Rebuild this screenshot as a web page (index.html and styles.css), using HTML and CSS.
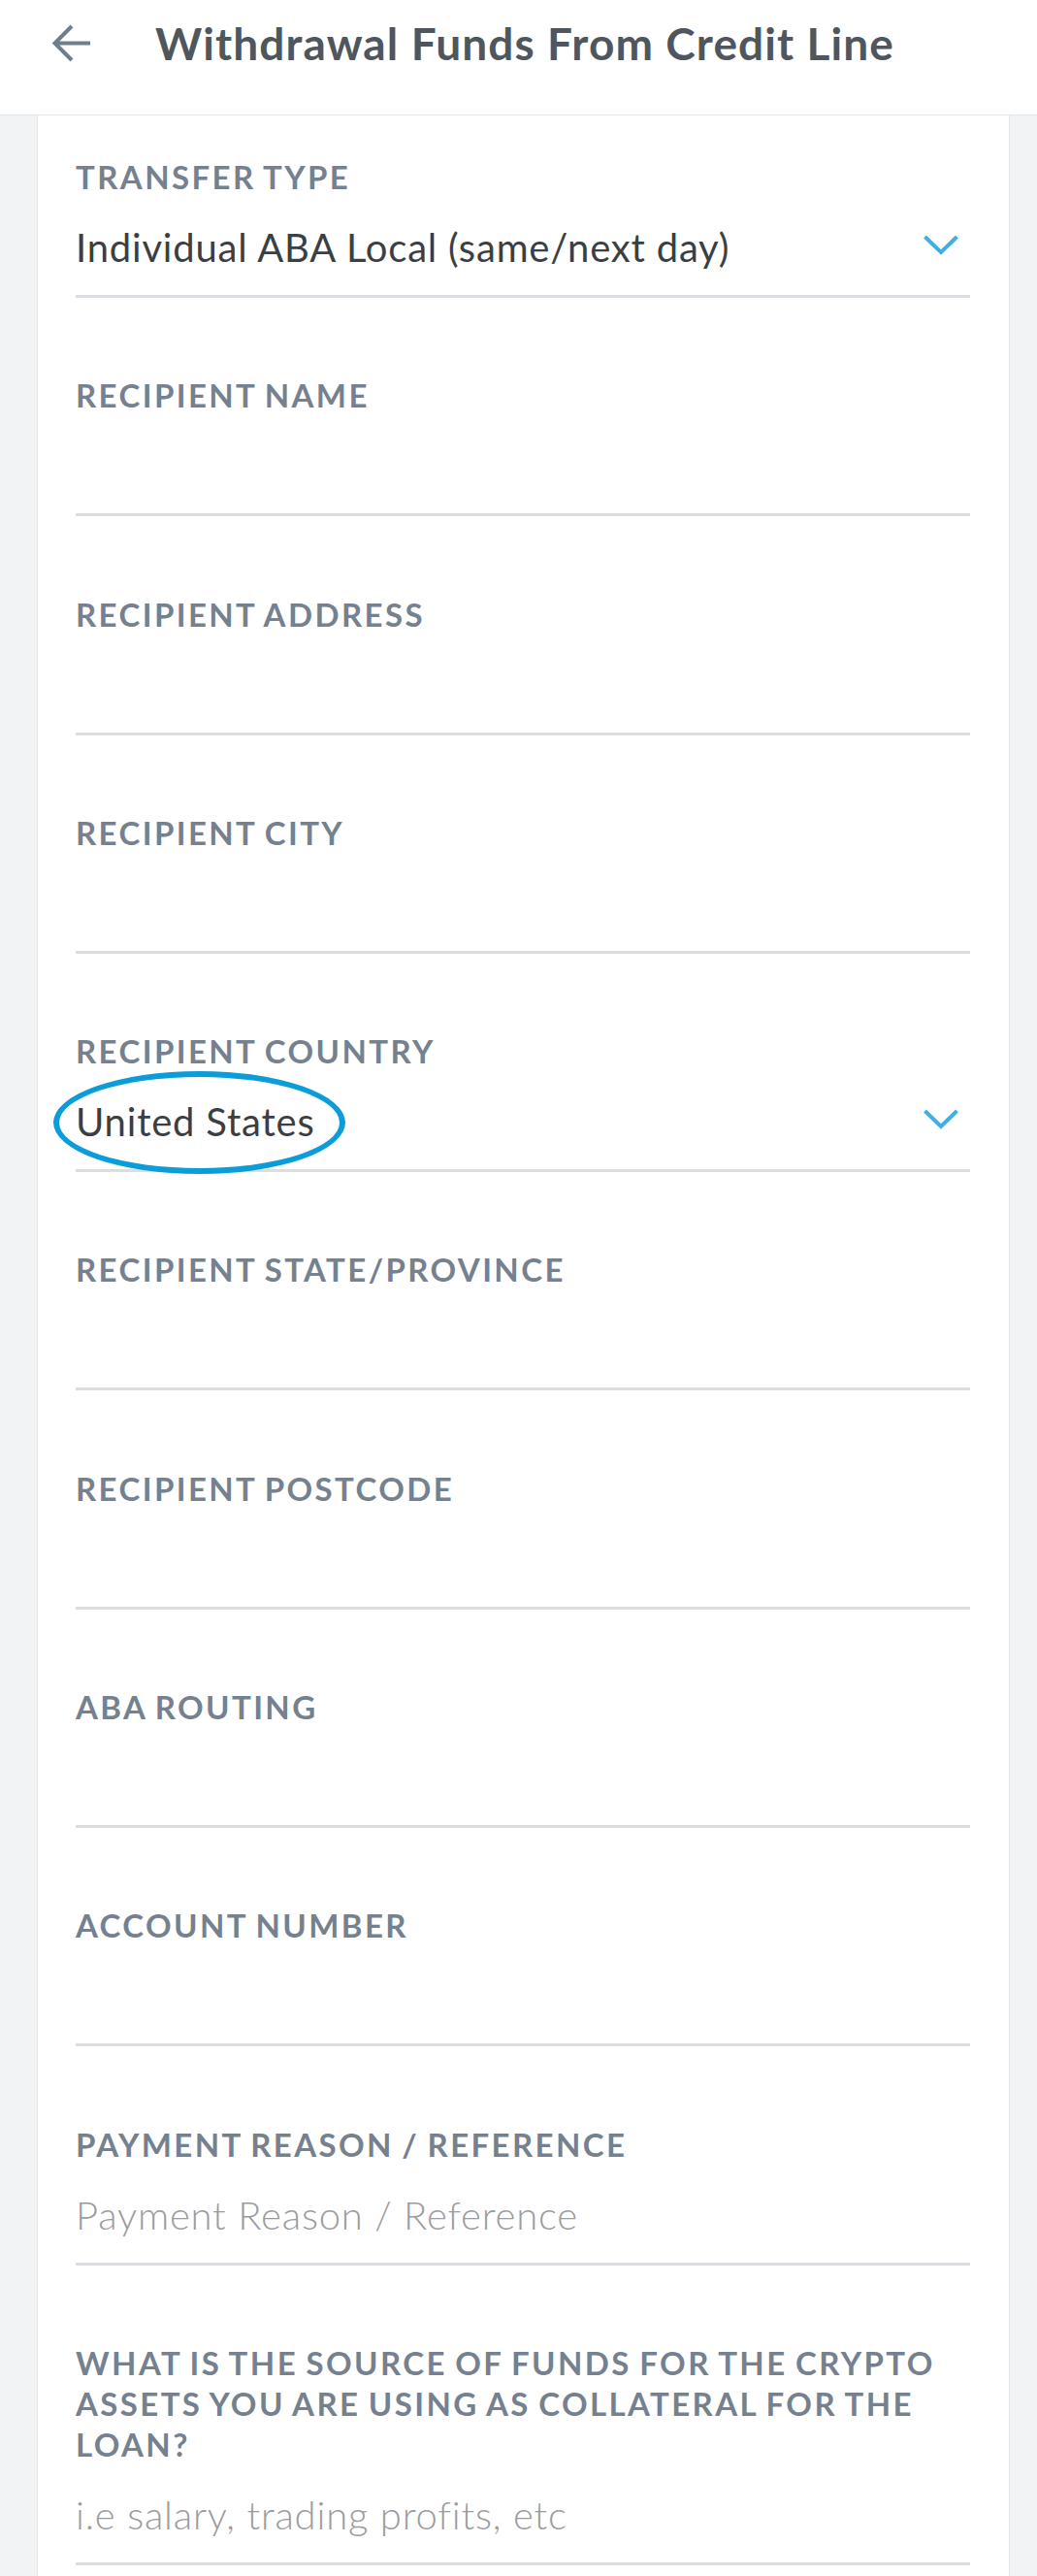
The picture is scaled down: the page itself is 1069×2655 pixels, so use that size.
FILE: index.html
```html
<!DOCTYPE html>
<html lang="en">
<head>
<meta charset="utf-8">
<title>Withdrawal Funds From Credit Line</title>
<link rel="stylesheet" href="styles.css">
</head>
<body>
<div class="app">
  <header class="topbar">
    <div class="topbar-row">
      <svg class="back" viewBox="0 0 42 42" width="42" height="42" aria-hidden="true">
        <path d="M40 20.5H4 M21 3 L3.5 20.5 L21 38" fill="none" stroke="#6f7e8d" stroke-width="4" stroke-linecap="butt" stroke-linejoin="miter"/>
      </svg>
      <h1 class="title">Withdrawal Funds From Credit Line</h1>
    </div>
  </header>
  <main class="card">
    <div class="field">
      <div class="label">TRANSFER TYPE</div>
      <div class="value-row">
        <span class="value">Individual ABA Local (same/next day)</span>
        <svg class="chev" viewBox="0 0 36 22" width="36" height="22" aria-hidden="true"><path d="M1.5 2 L18 18 L34.5 2" fill="none" stroke="#3eb0e2" stroke-width="4"/></svg>
      </div>
    </div>
    <div class="field">
      <div class="label">RECIPIENT NAME</div>
      <div class="value-row"></div>
    </div>
    <div class="field">
      <div class="label">RECIPIENT ADDRESS</div>
      <div class="value-row"></div>
    </div>
    <div class="field">
      <div class="label">RECIPIENT CITY</div>
      <div class="value-row"></div>
    </div>
    <div class="field">
      <div class="label">RECIPIENT COUNTRY</div>
      <div class="value-row">
        <span class="value circled">United States<span class="ring" aria-hidden="true"></span></span>
        <svg class="chev" viewBox="0 0 36 22" width="36" height="22" aria-hidden="true"><path d="M1.5 2 L18 18 L34.5 2" fill="none" stroke="#3eb0e2" stroke-width="4"/></svg>
      </div>
    </div>
    <div class="field">
      <div class="label">RECIPIENT STATE/PROVINCE</div>
      <div class="value-row"></div>
    </div>
    <div class="field">
      <div class="label">RECIPIENT POSTCODE</div>
      <div class="value-row"></div>
    </div>
    <div class="field">
      <div class="label">ABA ROUTING</div>
      <div class="value-row"></div>
    </div>
    <div class="field">
      <div class="label">ACCOUNT NUMBER</div>
      <div class="value-row"></div>
    </div>
    <div class="field">
      <div class="label">PAYMENT REASON / REFERENCE</div>
      <div class="value-row"><span class="placeholder">Payment Reason / Reference</span></div>
    </div>
    <div class="field">
      <div class="label">WHAT IS THE SOURCE OF FUNDS FOR THE CRYPTO ASSETS YOU ARE USING AS COLLATERAL FOR THE LOAN?</div>
      <div class="value-row"><span class="placeholder">i.e salary, trading profits, etc</span></div>
    </div>
  </main>
</div>
</body>
</html>
```
FILE: styles.css
```css
* { box-sizing: border-box; }
html, body { margin: 0; padding: 0; }
body {
  background: #f2f3f5;
  font-family: Lato, "Open Sans", "Liberation Sans", sans-serif;
}
.app {
  height: 2655px;
  overflow: hidden;
  display: flex;
  flex-direction: column;
}
.topbar {
  height: 119px;
  flex: none;
  background: #ffffff;
  border-bottom: 1px solid #e4e5e7;
}
.topbar-row {
  height: 90px;
  display: flex;
  align-items: center;
  padding-left: 53px;
}
.back { flex: none; display: block; }
.title {
  margin: 0 0 0 65px;
  font-size: 46px;
  line-height: 56px;
  font-weight: 700;
  letter-spacing: 1.1px;
  color: #50565d;
}
.card {
  flex: 1;
  margin: 0 28px 0 38px;
  background: #ffffff;
  border-left: 1px solid #e3e4e7;
  border-right: 1px solid #e3e4e7;
  padding: 42px 40px 0 39px;
}
.field + .field { margin-top: 79.3px; }
.label {
  font-size: 33px;
  line-height: 42px;
  font-weight: 700;
  letter-spacing: 2.4px;
  word-spacing: -2px;
  color: #75818f;
  margin-bottom: 24px;
}
.value-row {
  height: 80px;
  padding-bottom: 21px;
  border-bottom: 3px solid #dcdde0;
  display: flex;
  align-items: flex-start;
  justify-content: space-between;
}
.value {
  font-size: 40px;
  line-height: 56px;
  letter-spacing: 0.8px;
  color: #3a3f45;
  white-space: nowrap;
}
.placeholder {
  font-size: 40px;
  line-height: 56px;
  font-weight: 300;
  letter-spacing: 0.8px;
  color: #9b9c9e;
}
.chev {
  display: block;
  margin: 15px 12px 0 0;
  flex: none;
}
.circled { position: relative; }
.ring {
  position: absolute;
  left: -23px;
  top: -24px;
  width: 301px;
  height: 106px;
  border: 6px solid #0a9dd9;
  border-radius: 50%;
}
```
